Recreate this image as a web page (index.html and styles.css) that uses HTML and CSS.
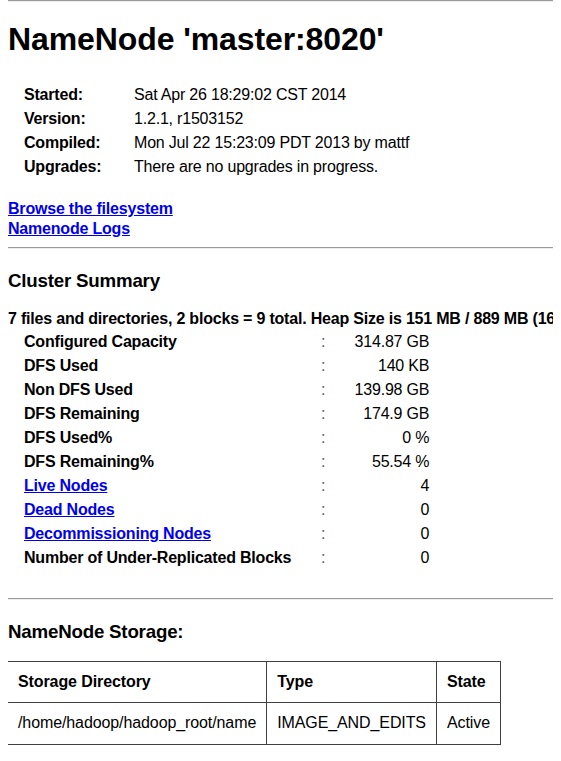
FILE: index.html
```html
<!DOCTYPE html>
<html>
<head>
<meta charset="utf-8">
<title>Hadoop NameNode master:8020</title>
<link rel="stylesheet" href="styles.css">
</head>
<body>
<hr class="rule top-rule">
<h1 class="title">NameNode 'master:8020'</h1>
<table class="info">
<tr><td class="label">Started:</td><td class="value">Sat Apr 26 18:29:02 CST 2014</td></tr>
<tr><td class="label">Version:</td><td class="value">1.2.1, r1503152</td></tr>
<tr><td class="label">Compiled:</td><td class="value">Mon Jul 22 15:23:09 PDT 2013 by mattf</td></tr>
<tr><td class="label">Upgrades:</td><td class="value">There are no upgrades in progress.</td></tr>
</table>
<div class="links">
<a class="link" href="#">Browse the filesystem</a>
<a class="link" href="#">Namenode Logs</a>
</div>
<hr class="rule">
<h3 class="section">Cluster Summary</h3>
<div class="summary-line">7 files and directories, 2 blocks = 9 total. Heap Size is 151 MB / 889 MB (16%)</div>
<table class="cluster">
<tr><td class="label">Configured Capacity</td><td class="colon">:</td><td class="num">314.87 GB</td></tr>
<tr><td class="label">DFS Used</td><td class="colon">:</td><td class="num">140 KB</td></tr>
<tr><td class="label">Non DFS Used</td><td class="colon">:</td><td class="num">139.98 GB</td></tr>
<tr><td class="label">DFS Remaining</td><td class="colon">:</td><td class="num">174.9 GB</td></tr>
<tr><td class="label">DFS Used%</td><td class="colon">:</td><td class="num">0 %</td></tr>
<tr><td class="label">DFS Remaining%</td><td class="colon">:</td><td class="num">55.54 %</td></tr>
<tr><td class="label"><a class="link" href="#">Live Nodes</a></td><td class="colon">:</td><td class="num">4</td></tr>
<tr><td class="label"><a class="link" href="#">Dead Nodes</a></td><td class="colon">:</td><td class="num">0</td></tr>
<tr><td class="label"><a class="link" href="#">Decommissioning Nodes</a></td><td class="colon">:</td><td class="num">0</td></tr>
<tr><td class="label">Number of Under-Replicated Blocks</td><td class="colon">:</td><td class="num">0</td></tr>
</table>
<hr class="rule">
<h3 class="section storage-title">NameNode Storage:</h3>
<table class="storage">
<tr><th>Storage Directory</th><th>Type</th><th>State</th></tr>
<tr><td>/home/hadoop/hadoop_root/name</td><td>IMAGE_AND_EDITS</td><td>Active</td></tr>
</table>
</body>
</html>
```
FILE: styles.css
```css
html, body {
  overflow-x: hidden;
}
body {
  margin: 0 8px 8px 8px;
  background: #ffffff;
  color: #000000;
  font-family: "Liberation Sans", Arial, sans-serif;
  font-size: 16px;
  letter-spacing: -0.2px;
}
.rule {
  border: none;
  border-top: 1px solid #9a9a9a;
  border-bottom: 1px solid #eeeeee;
  height: 0;
  margin: 8px -8px;
}
.top-rule {
  margin-top: 0;
}
.title {
  font-size: 32px;
  font-weight: bold;
  letter-spacing: -0.1px;
  margin: 19px 0 24px 0;
}
.info {
  border-spacing: 2px;
  margin: 0;
}
.info td {
  padding: 2px 10px 2px 14px;
  white-space: nowrap;
  line-height: 18px;
}
.info .label {
  font-weight: bold;
  padding-right: 14px;
  width: 80px;
}
.links {
  display: flex;
  flex-direction: column;
  align-items: flex-start;
  margin-top: 19px;
  line-height: 20px;
}
.link {
  color: #0000ee;
  font-weight: bold;
  text-decoration: underline;
}
.section {
  font-size: 18.72px;
  font-weight: bold;
  margin: 21px 0 18px 0;
}
.storage-title {
  margin-top: 21px;
}
.summary-line {
  font-weight: bold;
  white-space: nowrap;
  line-height: 18px;
}
.cluster {
  border-spacing: 2px;
  margin-top: 1px;
  margin-bottom: 27px;
}
.cluster td {
  padding: 2px 10px;
  line-height: 18px;
  white-space: nowrap;
}
.cluster .label {
  font-weight: bold;
  padding-left: 14px;
  width: 271px;
}
.cluster .colon {
  padding-left: 14px;
  color: #555;
}
.cluster .num {
  text-align: right;
  width: 82px;
}
.storage {
  border-collapse: collapse;
  margin: 0 0 0 -1px;
  letter-spacing: -0.1px;
}
.storage th, .storage td {
  border: 1px solid #404040;
  padding: 11px 10px;
  line-height: 18px;
  text-align: left;
  white-space: nowrap;
}
.storage th {
  font-weight: bold;
}
.storage td {
  font-weight: normal;
  padding-bottom: 12px;
}
```
